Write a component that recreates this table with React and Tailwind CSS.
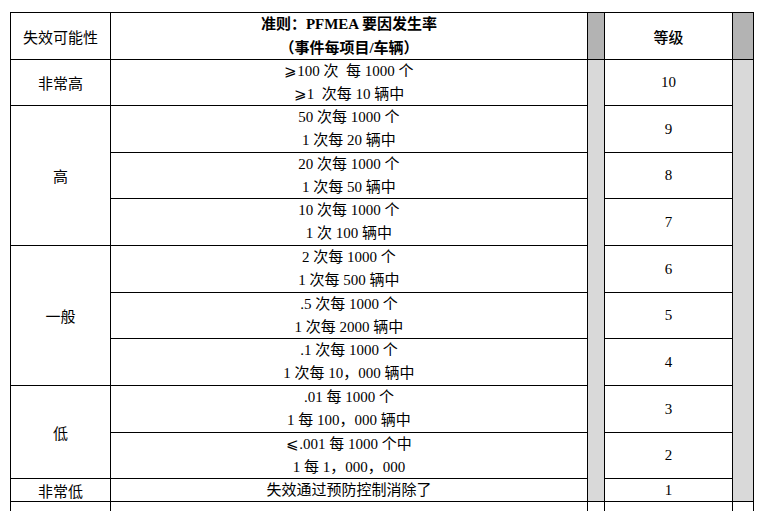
import React from "react";

const crit = [
  ["⩾100 次  每 1000 个", "⩾1  次每 10 辆中"],
  ["50 次每 1000 个", "1 次每 20 辆中"],
  ["20 次每 1000 个", "1 次每 50 辆中"],
  ["10 次每 1000 个", "1 次 100 辆中"],
  ["2 次每 1000 个", "1 次每 500 辆中"],
  [".5 次每 1000 个", "1 次每 2000 辆中"],
  [".1 次每 1000 个", "1 次每 10，000 辆中"],
  [".01 每 1000 个", "1 每 100，000 辆中"],
  ["⩽.001 每 1000 个中", "1 每 1，000，000"],
];

const rowStarts = [
  "row-start-2",
  "row-start-3",
  "row-start-4",
  "row-start-5",
  "row-start-6",
  "row-start-7",
  "row-start-8",
  "row-start-9",
  "row-start-10",
];

const cell =
  "bg-white flex flex-col items-center justify-center text-black text-[15px] leading-[23px] whitespace-pre";
const sans = "font-['Noto_Sans_CJK_SC',sans-serif]";

export default function App() {
  return (
    <div className="w-[761px] h-[511px] overflow-hidden bg-white font-['Liberation_Serif','Noto_Sans_CJK_SC',serif]">
      <div className="ml-[10px] mt-[12px] inline-grid bg-black gap-px p-px grid-cols-[99px_476px_16px_127px_20px] grid-rows-[46px_45px_46px_45px_46px_46px_45px_46px_46px_45px_22px_30px]">
        {/* header */}
        <div className={`${cell} col-start-1 row-start-1 ${sans}`}>失效可能性</div>
        <div className={`${cell} col-start-2 row-start-1 leading-[24px] font-bold`}>
          <span>准则：PFMEA 要因发生率</span>
          <span>（事件每项目/车辆）</span>
        </div>
        <div className="col-start-3 row-start-1 bg-[#b3b3b3]" />
        <div className={`${cell} col-start-4 row-start-1 ${sans} font-medium`}>等级</div>
        <div className="col-start-5 row-start-1 bg-[#b3b3b3]" />

        {/* left group column */}
        <div className={`${cell} col-start-1 row-start-2 ${sans}`}>非常高</div>
        <div className={`${cell} col-start-1 row-start-3 row-span-3 ${sans}`}>高</div>
        <div className={`${cell} col-start-1 row-start-6 row-span-3 ${sans}`}>一般</div>
        <div className={`${cell} col-start-1 row-start-9 row-span-2 ${sans}`}>低</div>
        <div className={`${cell} col-start-1 row-start-11 ${sans}`}>非常低</div>

        {/* criteria */}
        {crit.map((c, i) => (
          <div key={i} className={`${cell} col-start-2 ${rowStarts[i]}`}>
            <span>{c[0]}</span>
            <span>{c[1]}</span>
          </div>
        ))}
        <div className={`${cell} col-start-2 row-start-11`}>失效通过预防控制消除了</div>

        {/* gray columns */}
        <div className="col-start-3 row-start-2 row-span-10 bg-[#d9d9d9]" />
        <div className="col-start-5 row-start-2 row-span-10 bg-[#d9d9d9]" />

        {/* grades */}
        {[10, 9, 8, 7, 6, 5, 4, 3, 2].map((g, i) => (
          <div key={g} className={`${cell} col-start-4 ${rowStarts[i]}`}>
            {g}
          </div>
        ))}
        <div className={`${cell} col-start-4 row-start-11`}>1</div>

        {/* continuation row */}
        <div className="bg-white col-start-1 row-start-12" />
        <div className="bg-white col-start-2 row-start-12" />
        <div className="bg-white col-start-3 row-start-12" />
        <div className="bg-white col-start-4 row-start-12" />
        <div className="bg-white col-start-5 row-start-12" />
      </div>
    </div>
  );
}
